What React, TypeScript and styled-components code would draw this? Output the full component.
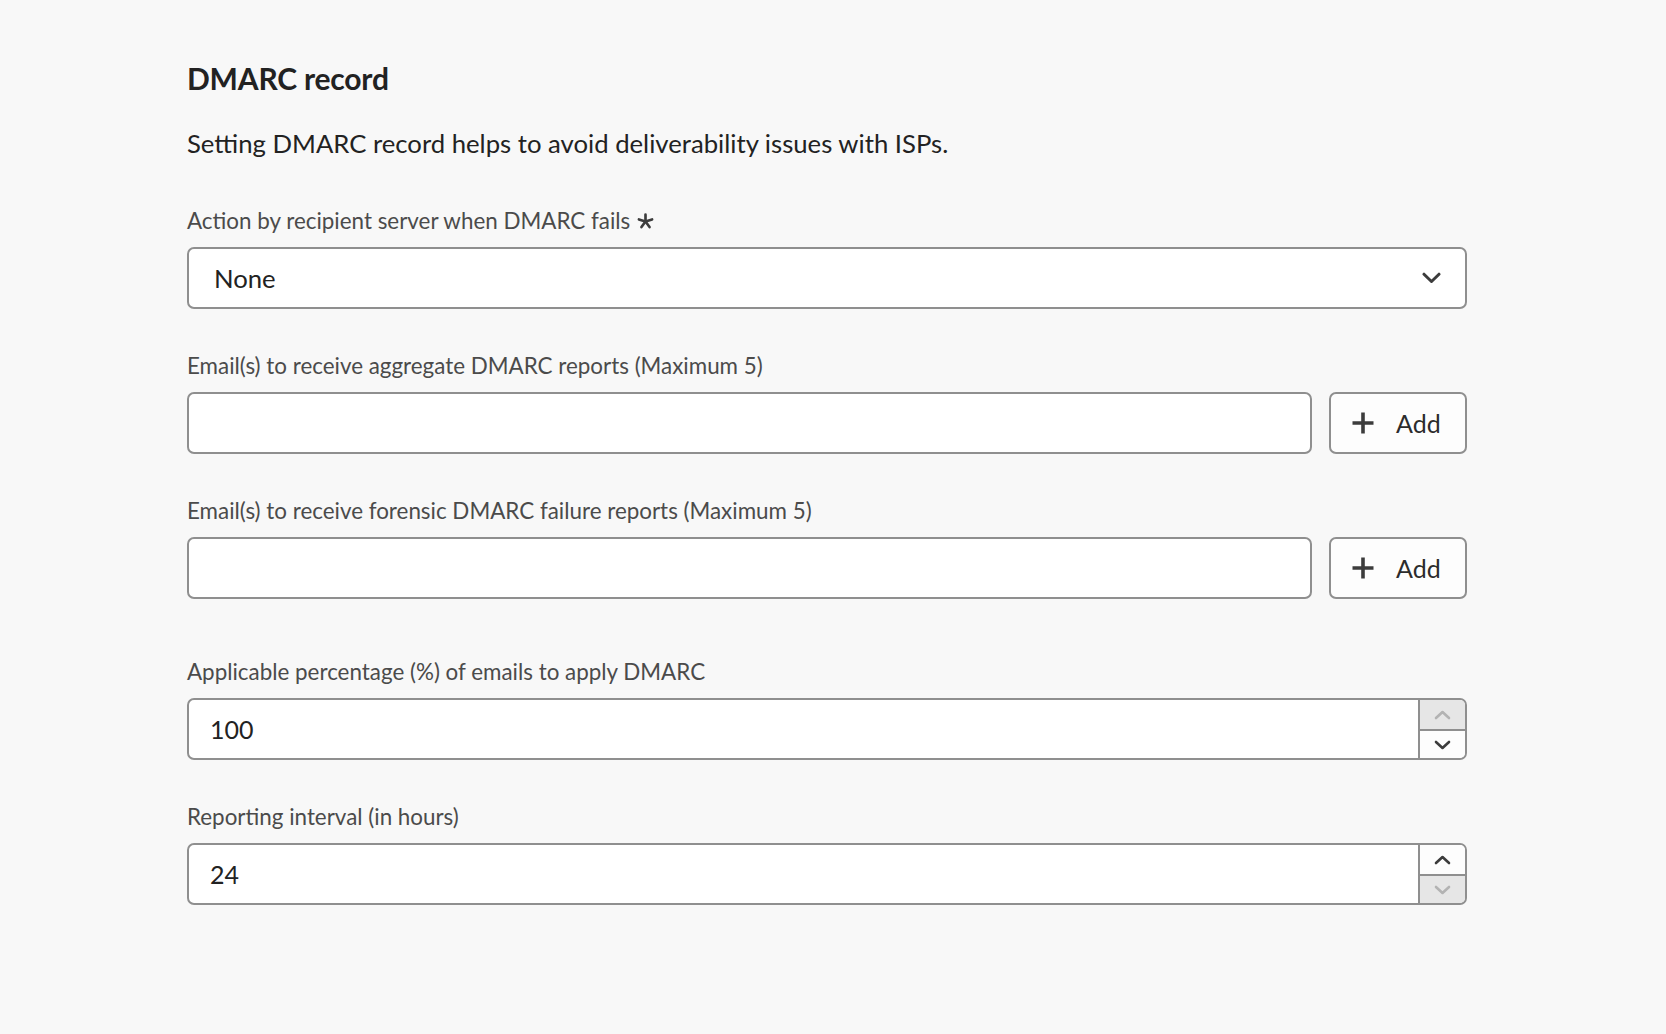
import React from "react";
import styled, { createGlobalStyle } from "styled-components";

const GlobalStyle = createGlobalStyle`
  html, body {
    margin: 0;
    padding: 0;
    background: #f8f8f8;
  }
  body {
    font-family: Lato, "Open Sans", sans-serif;
    color: #222222;
  }
  * { box-sizing: border-box; }
`;

const Page = styled.div`
  min-height: 1034px;
  background: #f8f8f8;
  padding: 58px 0 0 187px;
`;

const Form = styled.section`
  width: 1280px;
  display: flex;
  flex-direction: column;
`;

const Heading = styled.h2`
  margin: 0;
  font-size: 30px;
  line-height: 40px;
  font-weight: 700;
  color: #222222;
  letter-spacing: -0.2px;
`;

const Description = styled.p`
  margin: 28px 0 47px;
  font-size: 25.7px;
  line-height: 34px;
  color: #222222;
`;

const FieldList = styled.div`
  display: flex;
  flex-direction: column;
  gap: 43px;
`;

const Field = styled.div<{ $extraTop?: number; $gap?: number }>`
  display: flex;
  flex-direction: column;
  gap: ${(p) => p.$gap ?? 12}px;
  margin-top: ${(p) => p.$extraTop ?? 0}px;
`;

const Label = styled.label`
  display: flex;
  align-items: center;
  gap: 7px;
  height: 28px;
  font-size: 22.4px;
  line-height: 28px;
  color: #4b4b4b;
`;

const Row = styled.div`
  display: flex;
  gap: 17px;
`;

const boxBase = `
  height: 62px;
  border: 2px solid #8f8f8f;
  border-radius: 7px;
  background: #ffffff;
`;

const SelectButton = styled.button`
  ${boxBase}
  width: 100%;
  display: flex;
  align-items: center;
  justify-content: space-between;
  padding: 0 24px 0 25px;
  font-family: inherit;
  font-size: 25.7px;
  color: #222222;
  cursor: pointer;
  text-align: left;
`;

const TextInput = styled.input`
  ${boxBase}
  flex: 1;
  padding: 0 22px;
  font-family: inherit;
  font-size: 25px;
  color: #222222;
  outline: none;
`;

const AddButton = styled.button`
  height: 62px;
  width: 138px;
  border: 2px solid #8f8f8f;
  border-radius: 7px;
  background: #fdfdfd;
  display: flex;
  align-items: center;
  gap: 21px;
  padding: 0 0 0 20px;
  font-family: inherit;
  font-size: 25px;
  color: #2c2c2c;
  cursor: pointer;
`;

const NumberBox = styled.div`
  ${boxBase}
  display: flex;
  overflow: hidden;
`;

const NumberInput = styled.input`
  flex: 1;
  border: none;
  background: transparent;
  padding: 0 21px;
  font-family: inherit;
  font-size: 25px;
  color: #222222;
  outline: none;
`;

const Stepper = styled.div`
  width: 47px;
  border-left: 2px solid #8f8f8f;
  display: grid;
  grid-template-rows: 1fr 1fr;
`;

const StepButton = styled.button<{ $disabled?: boolean; $top?: boolean }>`
  border: none;
  border-top: ${(p) => (p.$top ? "none" : "2px solid #8f8f8f")};
  padding: 0;
  margin: 0;
  display: flex;
  align-items: center;
  justify-content: center;
  background: ${(p) => (p.$disabled ? "#e6e6e6" : "#fdfdfd")};
  color: ${(p) => (p.$disabled ? "#b3b3b3" : "#3c3c3c")};
  cursor: ${(p) => (p.$disabled ? "default" : "pointer")};
`;

const Chevron = () => (
  <svg width={19} height={12} viewBox="0 0 19 12" fill="none">
    <path d="M2 2.2 L9.5 9.5 L17 2.2" stroke="#3c3c3c" strokeWidth="3" strokeLinecap="round" strokeLinejoin="round" />
  </svg>
);

const SmallChevron = ({ up }: { up?: boolean }) => (
  <svg width={17} height={10} viewBox="0 0 17 10" fill="none">
    <path
      d={up ? "M2 8 L8.5 2 L15 8" : "M2 2 L8.5 8 L15 2"}
      stroke="currentColor"
      strokeWidth="2.6"
      strokeLinecap="round"
      strokeLinejoin="round"
    />
  </svg>
);

const PlusIcon = () => (
  <svg width={24} height={24} viewBox="0 0 24 24" fill="none">
    <path d="M12 1.5 V22.5 M1.5 12 H22.5" stroke="#3c3c3c" strokeWidth="3.6" />
  </svg>
);

const Asterisk = () => (
  <svg width={17} height={16} viewBox="0 0 16 15" fill="none">
    <g stroke="#3c3c3c" strokeWidth="2.5" strokeLinecap="round">
      <path d="M8 8 V1.5" />
      <path d="M8 8 L1.8 6" />
      <path d="M8 8 L14.2 6" />
      <path d="M8 8 L4.2 13.2" />
      <path d="M8 8 L11.8 13.2" />
    </g>
  </svg>
);

const NumberField = ({ value, upDisabled, downDisabled }: { value: string; upDisabled?: boolean; downDisabled?: boolean }) => (
  <NumberBox>
    <NumberInput defaultValue={value} />
    <Stepper>
      <StepButton $top $disabled={upDisabled} aria-label="Increment">
        <SmallChevron up />
      </StepButton>
      <StepButton $disabled={downDisabled} aria-label="Decrement">
        <SmallChevron />
      </StepButton>
    </Stepper>
  </NumberBox>
);

export default function App() {
  return (
    <>
      <GlobalStyle />
      <Page>
        <Form>
          <Heading>DMARC record</Heading>
          <Description>Setting DMARC record helps to avoid deliverability issues with ISPs.</Description>

          <FieldList>
            <Field>
              <Label>
                Action by recipient server when DMARC fails <Asterisk />
              </Label>
              <SelectButton>
                <span>None</span>
                <Chevron />
              </SelectButton>
            </Field>

            <Field>
              <Label>Email(s) to receive aggregate DMARC reports (Maximum 5)</Label>
              <Row>
                <TextInput />
                <AddButton>
                  <PlusIcon />
                  <span>Add</span>
                </AddButton>
              </Row>
            </Field>

            <Field>
              <Label>Email(s) to receive forensic DMARC failure reports (Maximum 5)</Label>
              <Row>
                <TextInput />
                <AddButton>
                  <PlusIcon />
                  <span>Add</span>
                </AddButton>
              </Row>
            </Field>

            <Field $extraTop={16}>
              <Label>Applicable percentage (%) of emails to apply DMARC</Label>
              <NumberField value="100" upDisabled />
            </Field>

            <Field>
              <Label>Reporting interval (in hours)</Label>
              <NumberField value="24" downDisabled />
            </Field>
          </FieldList>
        </Form>
      </Page>
    </>
  );
}
